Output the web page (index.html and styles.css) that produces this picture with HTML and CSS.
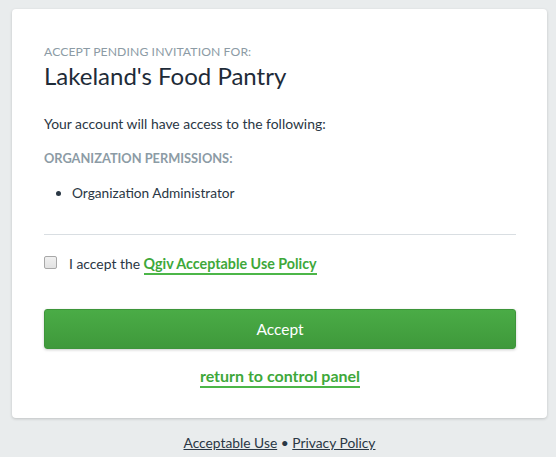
FILE: index.html
```html
<!DOCTYPE html>
<html>
<head>
<meta charset="utf-8">
<link rel="stylesheet" href="styles.css">
</head>
<body>
<div class="page">
  <div class="card">
    <div class="eyebrow">ACCEPT PENDING INVITATION FOR:</div>
    <h1 class="title">Lakeland's Food Pantry</h1>
    <p class="intro">Your account will have access to the following:</p>
    <div class="perm-head">ORGANIZATION PERMISSIONS:</div>
    <ul class="perm-list">
      <li>Organization Administrator</li>
    </ul>
    <hr class="divider">
    <label class="accept-row">
      <span class="checkbox"></span>
      <span class="accept-text">I accept the <a class="link" href="#">Qgiv Acceptable Use Policy</a></span>
    </label>
    <button class="btn">Accept</button>
    <div class="return"><a class="link" href="#">return to control panel</a></div>
  </div>
  <div class="footer">
    <a href="#">Acceptable Use</a> &bull; <a href="#">Privacy Policy</a>
  </div>
</div>
</body>
</html>
```
FILE: styles.css
```css
html, body {
  margin: 0;
  padding: 0;
  background: #e9eced;
  font-family: "Lato", "Open Sans", sans-serif;
  color: #2a3744;
}
.page {
  padding: 9px 9px 0 12px;
  display: flex;
  flex-direction: column;
}
.card {
  background: #fff;
  border-radius: 4px;
  box-shadow: 0 1px 3px rgba(0,0,0,0.18);
  padding: 35px 31px 33px 32px;
  display: flex;
  flex-direction: column;
}
.eyebrow {
  font-size: 12.2px;
  color: #8c9ba5;
  letter-spacing: 0.1px;
  line-height: 16px;
}
.title {
  margin: 2px 0 0;
  font-size: 24px;
  font-weight: 400;
  color: #1e2b38;
  line-height: 28px;
}
.intro {
  margin: 25px 0 0;
  font-size: 13.9px;
  line-height: 18px;
  color: #2a3744;
}
.perm-head {
  margin-top: 16px;
  font-size: 12.8px;
  font-weight: 700;
  color: #8c9ba5;
  line-height: 18px;
}
.perm-list {
  margin: 17px 0 0;
  padding-left: 28px;
  font-size: 13.7px;
  line-height: 18px;
}
.divider {
  border: 0;
  border-top: 1px solid #d9dee2;
  margin: 32px 0 0;
}
.accept-row {
  margin-top: 20px;
  display: flex;
  align-items: center;
  font-size: 13.9px;
  line-height: 18px;
}
.checkbox {
  width: 11px;
  height: 11px;
  border: 1px solid #a8a8a8;
  border-radius: 2px;
  background: linear-gradient(#f0f0f0, #e2e2e2);
  margin-right: 12px;
  margin-top: -4px;
}
.link {
  color: #3ea83a;
  font-weight: 700;
  text-decoration: none;
  border-bottom: 2px solid #4cb648;
  padding-bottom: 1px;
}
.accept-text .link {
  font-size: 14.3px;
}
.btn {
  margin-top: 36px;
  height: 40px;
  border: 1px solid #3d953a;
  border-radius: 3px;
  background: linear-gradient(#4aac46, #3f993b);
  color: #fff;
  font-family: inherit;
  font-size: 15.5px;
  box-shadow: 0 1px 3px rgba(0,0,0,0.2);
}
.return {
  margin-top: 18px;
  text-align: center;
  font-size: 16px;
  line-height: 18px;
}
.footer {
  margin-top: 16px;
  text-align: center;
  font-size: 13.8px;
  color: #2a3744;
}
.footer a {
  color: #2a3744;
  text-decoration: underline;
}
```
